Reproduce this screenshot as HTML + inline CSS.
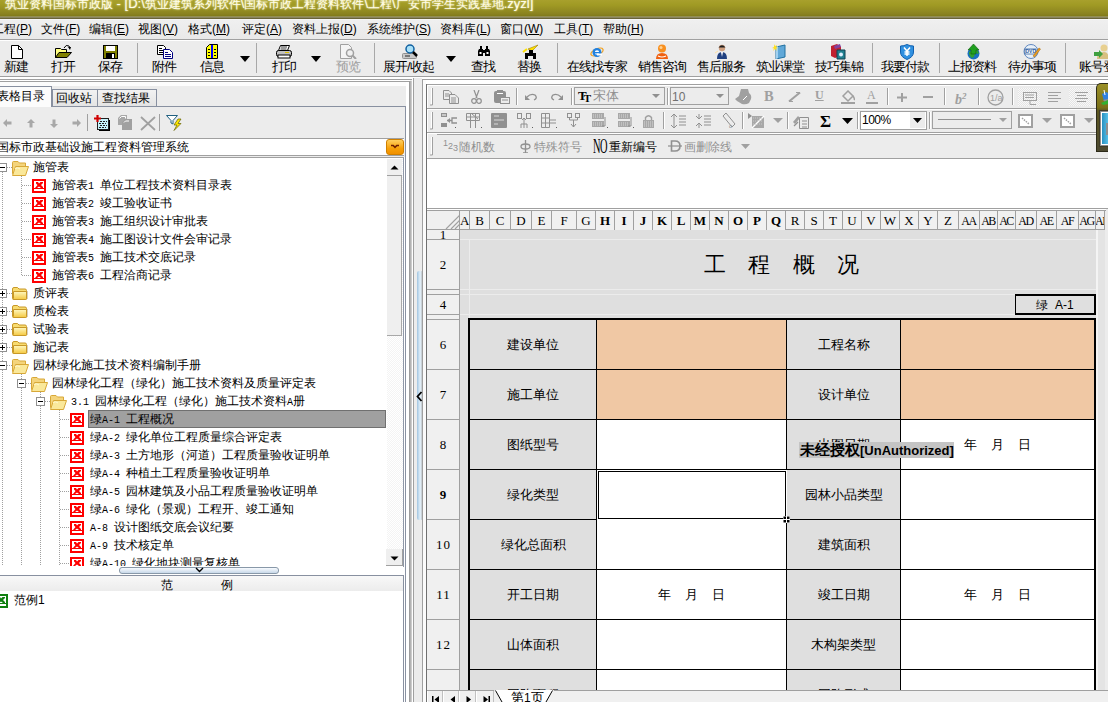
<!DOCTYPE html>
<html><head><meta charset="utf-8">
<style>
*{box-sizing:border-box;margin:0;padding:0}
html,body{width:1108px;height:702px;overflow:hidden;background:#f0f0f0;font-family:"Liberation Sans",sans-serif;font-size:12px;color:#000}
.a{position:absolute}
#title{left:0;top:0;width:1108px;height:19px;background:linear-gradient(#a8a02c 0px,#a09a24 5px,#8a8220 14px,#807a1a 16px,#a8a488 17px,#6a6438 18px,#6a6438 19px);}
#title .t{left:5px;top:-4px;font-size:12px;color:#fffde8;white-space:nowrap;text-shadow:0 0 2px #fff8c0}
#menu{left:0;top:19px;width:1108px;height:20px;background:linear-gradient(#efefef,#e9e9e9);border-top:1px solid #f6f6f6}
.mi{top:1px;white-space:nowrap;font-size:12px}
#tb{left:0;top:39px;width:1108px;height:38px;background:#ececec;border-top:1px solid #a0a0a0;border-bottom:1px solid #a0a0a0;box-shadow:inset 0 1px 0 #fff}
.tl{top:19px;white-space:nowrap;font-size:13px;line-height:15px;letter-spacing:-1px;font-weight:500}
.sep{width:1px;background:#a8a8a8}
.dd{width:0;height:0;border-left:5px solid transparent;border-right:5px solid transparent;border-top:6px solid #000}
.ch{text-align:center;font-family:"Liberation Serif",serif;font-size:13px;line-height:21px;background:#f0f0f0;border-right:1px solid #a0a0a0}
.rh{text-align:center;font-family:"Liberation Serif",serif;font-size:13px;letter-spacing:1px;text-indent:1px;background:#f0f0f0;border-right:1px solid #a0a0a0;border-bottom:1px solid #a0a0a0}
.lab{text-align:center;font-size:13px;line-height:16px;white-space:nowrap}
.tt{white-space:nowrap;font-size:12px;line-height:18px;height:18px}
.asc{font-family:"Liberation Mono",monospace;font-size:10px}
.dv{width:1px;background:repeating-linear-gradient(#a0a0a0 0 1px,transparent 1px 2px)}
.dh{height:1px;background:repeating-linear-gradient(90deg,#a0a0a0 0 1px,transparent 1px 2px)}
</style></head><body>

<!-- p_top.html -->

<div id="title" class="a"><div class="t a">筑业资料国标市政版<span style="font-size:13px"> - [D:\</span>筑业建筑系列软件<span style="font-size:13px">\</span>国标市政工程资料软件<span style="font-size:13px">\</span>工程<span style="font-size:13px">\</span>广安市学生实践基地<span style="font-size:13px">.zyzl]</span></div></div>
<div id="menu" class="a">
<div class="mi a" style="left:-8px">工程(<u>P</u>)</div>
<div class="mi a" style="left:41px">文件(<u>F</u>)</div>
<div class="mi a" style="left:89px">编辑(<u>E</u>)</div>
<div class="mi a" style="left:138px">视图(<u>V</u>)</div>
<div class="mi a" style="left:188px">格式(<u>M</u>)</div>
<div class="mi a" style="left:242px">评定(<u>A</u>)</div>
<div class="mi a" style="left:292px">资料上报(<u>D</u>)</div>
<div class="mi a" style="left:367px">系统维护(<u>S</u>)</div>
<div class="mi a" style="left:440px">资料库(<u>L</u>)</div>
<div class="mi a" style="left:500px">窗口(<u>W</u>)</div>
<div class="mi a" style="left:554px">工具(<u>T</u>)</div>
<div class="mi a" style="left:603px">帮助(<u>H</u>)</div>
</div>
<div id="tb" class="a">
<div class="tl a" style="left:4px">新建</div>
<div class="tl a" style="left:51px">打开</div>
<div class="tl a" style="left:98px">保存</div>
<div class="sep a" style="left:137px;top:3px;height:30px"></div>
<div class="tl a" style="left:152px">附件</div>
<div class="tl a" style="left:200px">信息</div>
<div class="dd a" style="left:240px;top:16px"></div>
<div class="sep a" style="left:256px;top:3px;height:30px"></div>
<div class="tl a" style="left:272px">打印</div>
<div class="dd a" style="left:311px;top:16px"></div>
<div class="tl a" style="left:336px;color:#a0a0a0">预览</div>
<div class="sep a" style="left:374px;top:3px;height:30px"></div>
<div class="tl a" style="left:383px">展开/收起</div>
<div class="dd a" style="left:446px;top:16px"></div>
<div class="tl a" style="left:471px">查找</div>
<div class="tl a" style="left:517px">替换</div>
<div class="sep a" style="left:557px;top:3px;height:30px"></div>
<div class="tl a" style="left:567px">在线找专家</div>
<div class="tl a" style="left:638px">销售咨询</div>
<div class="tl a" style="left:697px">售后服务</div>
<div class="tl a" style="left:756px">筑业课堂</div>
<div class="tl a" style="left:815px">技巧集锦</div>
<div class="sep a" style="left:872px;top:3px;height:30px"></div>
<div class="tl a" style="left:881px">我要付款</div>
<div class="sep a" style="left:939px;top:3px;height:30px"></div>
<div class="tl a" style="left:948px">上报资料</div>
<div class="tl a" style="left:1008px">待办事项</div>
<div class="sep a" style="left:1065px;top:3px;height:30px"></div>
<div class="tl a" style="left:1079px">账号登录</div>
</div>


<!-- p_icons.html -->
<!-- new -->
<svg class="a" style="left:11px;top:45px" width="12" height="14"><path d="M0.5 0.5H7.5L11.5 4.5V13.5H0.5Z" fill="#fff" stroke="#000"/><path d="M7.5 0.5V4.5H11.5" fill="none" stroke="#000"/></svg>
<!-- open -->
<svg class="a" style="left:55px;top:44px" width="17" height="15"><path d="M9 4 Q11 0 14 2 L15 4" fill="none" stroke="#000" stroke-width="1"/><path d="M13 3 L16 3 L15 6Z" fill="#000"/><path d="M0.5 4.5H5.5L6.5 5.5H11.5V13.5H0.5Z" fill="#ffff80" stroke="#000"/><path d="M0.5 13.5L4 8.5H16.5L12 13.5Z" fill="#808000" stroke="#000"/></svg>
<!-- save -->
<svg class="a" style="left:103px;top:45px" width="15" height="14"><rect x="0.5" y="0.5" width="14" height="13" fill="#808000" stroke="#000"/><rect x="3" y="1" width="9" height="5" fill="#fff"/><rect x="3" y="8" width="9" height="6" fill="#000"/><rect x="9" y="9" width="2" height="4" fill="#fff"/></svg>
<!-- attach -->
<svg class="a" style="left:157px;top:45px" width="17" height="14"><path d="M0.5 0.5H6.5L8.5 2.5V9.5H0.5Z" fill="#fff" stroke="#000"/><path d="M2 3.5H5M2 5.5H7M2 7.5H7" stroke="#000"/><path d="M6.5 4.5H12.5L15.5 7.5V13.5H6.5Z" fill="#fff" stroke="#000080"/><path d="M8 7.5H11M8 9.5H14M8 11.5H14" stroke="#000080"/></svg>
<!-- info -->
<svg class="a" style="left:206px;top:44px" width="12" height="15"><path d="M3.5 0.5H11.5V14.5H0.5V3.5Z" fill="#ffff00" stroke="#000"/><rect x="5" y="1" width="2" height="13" fill="#0000ff"/><path d="M2 5.5H4M8 5.5H10M2 8.5H4M8 8.5H10M2 11.5H4M8 11.5H10" stroke="#000"/></svg>
<!-- print -->
<svg class="a" style="left:276px;top:45px" width="16" height="14"><path d="M4.5 0.5H13.5L11.5 5.5H2.5Z" fill="#fff" stroke="#000"/><path d="M5 2H11M4.5 4H10.5" stroke="#000" stroke-width="0.8"/><rect x="0.5" y="5.5" width="15" height="6" rx="2" fill="#c0c0c0" stroke="#000"/><rect x="2" y="10" width="12" height="3" fill="#fff" stroke="#000"/><rect x="9" y="7" width="4" height="1" fill="#e0c000"/></svg>
<!-- preview gray -->
<svg class="a" style="left:340px;top:44px" width="17" height="15"><path d="M0.5 0.5H8.5L11.5 3.5V14.5H0.5Z" fill="#f4f4f4" stroke="#a0a0a0"/><circle cx="10" cy="9" r="3.5" fill="#f0f0f0" stroke="#a0a0a0" stroke-width="1.5"/><path d="M12.5 11.5L16 15" stroke="#a0a0a0" stroke-width="2"/></svg>
<!-- expand -->
<svg class="a" style="left:402px;top:44px" width="17" height="16"><rect x="0.5" y="9.5" width="14" height="5" rx="1" fill="#c8c8c8" stroke="#909090"/><path d="M3 12H8" stroke="#404040" stroke-width="1.2"/><circle cx="8" cy="5" r="4" fill="#a8e0f8" stroke="#1060a0" stroke-width="1.5"/><path d="M11 8L15 12" stroke="#000" stroke-width="2.5"/></svg>
<!-- binoculars -->
<svg class="a" style="left:478px;top:46px" width="12" height="11"><path d="M1 3H5V10H0V5Z M7 3H11L12 5V10H7Z" fill="#000"/><rect x="2" y="0" width="2" height="3" fill="#000"/><rect x="8" y="0" width="2" height="3" fill="#000"/><rect x="4" y="4" width="4" height="3" fill="#000"/><rect x="1.5" y="6" width="2" height="2" fill="#fff"/><rect x="8.5" y="6" width="2" height="2" fill="#fff"/></svg>
<!-- replace -->
<svg class="a" style="left:522px;top:44px" width="17" height="16"><path d="M6 5 L16 1 L10 7Z" fill="#ffe000" stroke="#a08000" stroke-width="0.6"/><path d="M3 15V9H7V6H11V9H14V15H11V12H6V15Z" fill="#000"/><path d="M1 8L5 5" stroke="#ffe000" stroke-width="2"/></svg>
<!-- IE -->
<svg class="a" style="left:590px;top:45px" width="14" height="13"><ellipse cx="7" cy="7" rx="6.5" ry="3" fill="none" stroke="#f0a020" stroke-width="1.3" transform="rotate(-25 7 7)"/><circle cx="7" cy="7.5" r="4.5" fill="#2080e0"/><circle cx="7" cy="7.5" r="2.2" fill="#fff"/><rect x="3" y="7" width="8" height="1.4" fill="#2080e0"/><rect x="7" y="8.5" width="5" height="2" fill="#fff"/></svg>
<!-- sales person -->
<svg class="a" style="left:655px;top:44px" width="14" height="15"><circle cx="7" cy="4.5" r="4" fill="#f89020"/><circle cx="6" cy="3.5" r="1.5" fill="#ffd090"/><path d="M1 15 Q1 9 7 9 Q13 9 13 15Z" fill="#f06010"/><path d="M3 12 Q7 14 11 12" stroke="#fff" stroke-width="1.2" fill="none"/></svg>
<!-- after sales -->
<svg class="a" style="left:715px;top:44px" width="13" height="15"><circle cx="7" cy="4" r="3.2" fill="#d0a080"/><path d="M3.5 3.5 Q7 -1 10.5 3.5" fill="#202020"/><path d="M2 15 Q2 8 7 8 Q12 8 12 15Z" fill="#204080"/><path d="M6 8L7 13L8 8Z" fill="#fff"/><path d="M0 9 L3 7" stroke="#ffe0a0" stroke-width="1"/></svg>
<!-- book -->
<svg class="a" style="left:772px;top:44px" width="15" height="15"><path d="M4 3L13 1V13L4 15Z" fill="#60a8d8" stroke="#2070a0"/><path d="M4 3L6 2V14L4 15Z" fill="#a0d0f0"/><path d="M2 0L3 2L5 1L4 3L6 4L4 4.5L5 7L3 5L1 7L2 4.5L0 4L2 3Z" fill="#ffe020"/></svg>
<!-- tips -->
<svg class="a" style="left:831px;top:44px" width="16" height="16"><path d="M0 2L6 0L10 3V12L4 14L0 12Z" fill="#c02030"/><path d="M3 2L9 0L10 3L4 5Z" fill="#8040a0"/><path d="M6 6H14V15H6Z" fill="#208090" stroke="#104050"/><circle cx="10" cy="10.5" r="2" fill="#e0f0ff"/></svg>
<!-- yen -->
<svg class="a" style="left:900px;top:44px" width="14" height="16"><path d="M7 0.5 Q10 2 13.5 2 V8 Q13.5 13 7 15.5 Q0.5 13 0.5 8 V2 Q4 2 7 0.5Z" fill="#3090e0" stroke="#1060b0"/><path d="M4 3.5L7 7L10 3.5M7 7V12M4.5 8H9.5M4.5 10H9.5" stroke="#fff" stroke-width="1.5" fill="none"/></svg>
<!-- globe -->
<svg class="a" style="left:966px;top:44px" width="15" height="16"><circle cx="7.5" cy="9.5" r="6" fill="#1870c0"/><path d="M3 8 Q6 6 8 9 Q10 12 6 14 Q3 12 3 8Z M9 5 Q12 6 13 9 L11 10Z" fill="#30a030"/><path d="M7.5 0L13 6H10V10H5V6H2Z" fill="#20a020" stroke="#106010" stroke-width="0.6"/></svg>
<!-- dvd -->
<svg class="a" style="left:1023px;top:44px" width="18" height="15"><circle cx="8" cy="7.5" r="7" fill="#e8f0f8" stroke="#6088c0"/><rect x="2" y="5" width="11" height="5" fill="#fff" stroke="#3060a0" stroke-width="0.8"/><text x="2.5" y="9.3" font-size="5" font-family="Liberation Sans" font-weight="bold" fill="#3060a0">DVD</text><path d="M10 12L16 4L17.5 5L11.5 13Z" fill="#f0a020" stroke="#a06000" stroke-width="0.5"/></svg>
<!-- account -->
<svg class="a" style="left:1094px;top:44px" width="14" height="16"><circle cx="10" cy="4" r="3.5" fill="#e8d090"/><path d="M3 15 Q3 8 10 8 Q15 8 15 15Z" fill="#d8c080"/><path d="M0 8H5V6L9 10L5 14V12H0Z" fill="#40a040"/></svg>

<!-- p_rightbg.html -->
<div class="a" style="left:422px;top:79px;width:686px;height:623px;background:#ececec;border-left:1px solid #a0a0a0;border-top:1px solid #a0a0a0"></div>
<div class="a" style="left:423px;top:80px;width:685px;height:622px;border-left:3px solid #fff;border-top:4px solid #fff"></div>
<div class="a" style="left:426px;top:84px;width:682px;height:618px;background:#ececec;border-left:1px solid #a0a0a0;border-top:1px solid #a0a0a0"></div>
<div class="a" style="left:427px;top:85px;width:681px;height:1px;background:#fff"></div>
<div class="a" style="left:427px;top:85px;width:1px;height:73px;background:#fff"></div>
<!-- toolbar separators lines -->
<div class="a" style="left:427px;top:108px;width:681px;height:1px;background:#a0a0a0"></div>
<div class="a" style="left:427px;top:109px;width:681px;height:1px;background:#fff"></div>
<div class="a" style="left:427px;top:132px;width:681px;height:1px;background:#a0a0a0"></div>
<div class="a" style="left:427px;top:133px;width:681px;height:1px;background:#fff"></div>
<div class="a" style="left:437px;top:134px;width:671px;height:1px;background:#a0a0a0"></div>
<div class="a" style="left:427px;top:158px;width:681px;height:1px;background:#a0a0a0"></div>
<div class="a" style="left:427px;top:159px;width:681px;height:49px;background:#fff"></div>
<div class="a" style="left:427px;top:208px;width:681px;height:1px;background:#a0a0a0"></div>

<!-- p_left.html -->
<div id="lp" class="a" style="left:0;top:77px;width:422px;height:625px;background:#ececec"></div>
<!-- two horizontal lines under toolbar -->
<div class="a" style="left:0;top:77px;width:1108px;height:2px;background:#fff"></div>
<div class="a" style="left:0;top:79px;width:412px;height:1px;background:#a0a0a0"></div>
<div class="a" style="left:0;top:80px;width:410px;height:1px;background:#fff"></div>
<div class="a" style="left:0;top:81px;width:410px;height:1px;background:#a0a0a0"></div>
<div class="a" style="left:0;top:82px;width:409px;height:4px;background:#fcfcfc"></div>
<!-- tabs -->
<div class="a" style="left:0;top:106px;width:406px;height:1px;background:#8890a0"></div>
<div class="a tab" style="left:52px;top:89px;width:46px;height:17px;background:linear-gradient(#f2f2f2,#e4e4e4);border:1px solid #8890a0;border-bottom:none;"></div>
<div class="a tab" style="left:97px;top:89px;width:60px;height:17px;background:linear-gradient(#f2f2f2,#e4e4e4);border:1px solid #8890a0;border-bottom:none;"></div>
<div class="a tab" style="left:-2px;top:86px;width:54px;height:21px;background:#fcfcfc;border:1px solid #8890a0;border-bottom:none;"></div>
<div class="a" style="left:-3px;top:88px;white-space:nowrap;font-size:12px;line-height:16px">表格目录</div>
<div class="a" style="left:56px;top:90px;white-space:nowrap;font-size:12px">回收站</div>
<div class="a" style="left:102px;top:90px;white-space:nowrap;font-size:12px">查找结果</div>
<!-- left toolbar -->
<div class="a" style="left:0;top:107px;width:404px;height:31px;background:#ececec"></div>
<!-- combo -->
<div class="a" style="left:0;top:138px;width:404px;height:18px;background:#fff;border-top:1px solid #a0a0a0;border-bottom:1px solid #a0a0a0"></div>
<div class="a" style="left:-3px;top:139px;white-space:nowrap;font-size:12px;line-height:16px">国标市政基础设施工程资料管理系统</div>
<div class="a" style="left:386px;top:139px;width:18px;height:16px;border-radius:3px;background:linear-gradient(#ffd060,#f7a008 60%,#f09000);border:1px solid #d08000"></div>
<!-- tree box -->
<div class="a" style="left:0;top:157px;width:405px;height:545px;background:#fff"></div>
<div class="a" style="left:0;top:157px;width:404px;height:410px;background:#fff;border-top:1px solid #a0a0a0;border-right:1px solid #9098a8"></div>
<!-- scrollbar -->
<div class="a" style="left:387px;top:159px;width:16px;height:407px;background:repeating-conic-gradient(#f4f4f4 0 25%,#ffffff 0 50%) 0 0/2px 2px"></div>
<div class="a" style="left:387px;top:159px;width:15px;height:17px;background:#efefef;border-bottom:1px solid #a0a0a0"></div>
<svg class="a" style="left:390px;top:165px" width="9" height="5"><path d="M0.5 4.5H8.5L4.5 0.5Z" fill="#000"/></svg>
<div class="a" style="left:387px;top:176px;width:15px;height:160px;background:#efefef;border-right:1px solid #a8a8a8;border-bottom:1px solid #a8a8a8"></div>
<div class="a" style="left:386px;top:549px;width:17px;height:17px;background:#efefef;border-right:1px solid #a0a0a0;border-bottom:1px solid #a0a0a0"></div>
<svg class="a" style="left:390px;top:556px" width="9" height="5"><path d="M0.5 0.5H8.5L4.5 4.5Z" fill="#000"/></svg>
<!-- bottom panel -->
<div class="a" style="left:0;top:575px;width:404px;height:127px;background:#fff;border-top:1px solid #8890a0;border-right:1px solid #8890a0"></div>
<div class="a" style="left:0;top:576px;width:403px;height:15px;background:linear-gradient(#f8f8f8,#ececec)"></div>
<div class="a" style="left:161px;top:578px;font-size:12px;line-height:15px">范</div>
<div class="a" style="left:221px;top:578px;font-size:12px;line-height:15px">例</div>
<div class="a" style="left:14px;top:593px;font-size:12px;line-height:15px">范例1</div>
<!-- splitter collapse -->
<div class="a" style="left:119px;top:567px;width:160px;height:7px;border-radius:3px;background:linear-gradient(#f8fbff,#c8d8e8);border:1px solid #8898a8"></div>
<!-- splitter vertical -->
<div class="a" style="left:405px;top:106px;width:1px;height:596px;background:#8a92a2"></div>
<div class="a" style="left:406px;top:82px;width:3px;height:620px;background:#fff"></div>
<div class="a" style="left:409px;top:81px;width:3px;height:621px;background:linear-gradient(90deg,#909090,#d8d8d8)"></div>
<div class="a" style="left:412px;top:78px;width:1px;height:624px;background:#fff"></div>
<div class="a" style="left:413px;top:78px;width:1px;height:624px;background:#a0a0a0"></div>
<div class="a" style="left:414px;top:78px;width:8px;height:624px;background:#ececec"></div>
<div class="a" style="left:417px;top:271px;width:6px;height:249px;background:linear-gradient(90deg,#a0c4e0,#e4f2fc 55%,#a8a8a8);border-radius:2px"></div>
<div class="a" style="left:422px;top:79px;width:1px;height:623px;background:#a0a0a0"></div>
<div class="a" style="left:423px;top:80px;width:3px;height:622px;background:#fbfbfb"></div>
<div class="a" style="left:426px;top:84px;width:1px;height:618px;background:#707070"></div>

<!-- p_ltb.html -->
<svg class="a" style="left:3px;top:119px" width="9" height="8"><path d="M0 4L4 0V2.5H8.5V5.5H4V8Z" fill="#a8a8a8"/></svg>
<svg class="a" style="left:27px;top:119px" width="8" height="9"><path d="M4 0L8 4H5.5V8.5H2.5V4H0Z" fill="#a8a8a8"/></svg>
<svg class="a" style="left:50px;top:119px" width="8" height="9"><path d="M4 9L8 5H5.5V0.5H2.5V5H0Z" fill="#a8a8a8"/></svg>
<svg class="a" style="left:72px;top:119px" width="9" height="8"><path d="M9 4L5 0V2.5H0.5V5.5H5V8Z" fill="#a8a8a8"/></svg>
<div class="a" style="left:87px;top:114px;width:1px;height:17px;background:#a0a0a0"></div>

<svg class="a" style="left:94px;top:115px" width="16" height="16"><rect x="5" y="5" width="11" height="11" fill="#000"/><rect x="3.5" y="3.5" width="11" height="11" fill="#c8f4fc" stroke="#202020"/><path d="M6 6.5H13M5 8.5H12M6 10.5H13M5 12.5H12" stroke="#202020" stroke-dasharray="2 1"/><path d="M0 3.5H7M3.5 0V7" stroke="#d00000" stroke-width="2.2"/></svg>
<svg class="a" style="left:118px;top:115px" width="15" height="16"><path d="M0 3L3 0H9V10H0Z" fill="#a8a8a8"/><path d="M1.5 3.5L3.5 1.5H7.5V3.5" fill="none" stroke="#fff"/><path d="M4 7L7 4H14V15H4Z" fill="#a0a0a0"/><path d="M6 7.5L7.5 6H11" fill="none" stroke="#fff"/></svg>
<svg class="a" style="left:140px;top:116px" width="16" height="15"><path d="M1 1L15 14M15 1L1 14" stroke="#a0a0a0" stroke-width="1.8"/></svg>
<div class="a" style="left:159px;top:114px;width:1px;height:17px;background:#a0a0a0"></div>

<svg class="a" style="left:166px;top:115px" width="17" height="16"><path d="M0.5 0.5H11.5L7 5.5V9L5 8V5.5Z" fill="#fff" stroke="#206080"/><path d="M12 4L8 10H11L8 15.5L15 8.5H12L15 4Z" fill="#ffe800" stroke="#606000" stroke-width="0.7"/></svg>
<!-- combo arrow -->
<svg class="a" style="left:390px;top:143px" width="10" height="8"><path d="M1 2.5H3.2L5 4.3L6.8 2.5H9" stroke="#702000" stroke-width="1.6" fill="none"/></svg>
<!-- collapse arrow on splitter -->
<svg class="a" style="left:195px;top:567px" width="9" height="6"><path d="M1 1L4.5 4.5L8 1" stroke="#000" stroke-width="1.4" fill="none"/></svg>
<!-- small green icon in bottom panel -->
<svg class="a" style="left:0px;top:594px" width="8" height="14"><g transform="translate(-6 0)"><rect x="0" y="0" width="14" height="14" fill="#108010"/><rect x="2" y="2" width="10" height="7" fill="#fff"/><path d="M4 3H6L7 4.5L8.5 3H11V4L9 6L11 8V9H9L7 7.5L5 9H3L5.5 6L4 4.5Z" fill="#108010"/><rect x="2" y="10" width="10" height="2" fill="#fff"/></g></svg>
<!-- splitter arrow -->
<svg class="a" style="left:416px;top:391px" width="7" height="11"><path d="M5.5 1L1.5 5.5L5.5 10" stroke="#000" stroke-width="1.8" fill="none"/></svg>

<!-- p_tree.html -->
<div class="a" style="left:0;top:158px;width:386px;height:408px;overflow:hidden">
<div class="a dv" style="left:2px;top:14px;height:394px"></div>
<div class="a dv" style="left:21px;top:18px;height:100px"></div>
<div class="a dv" style="left:21px;top:216px;height:192px"></div>
<div class="a dv" style="left:40px;top:234px;height:174px"></div>
<div class="a dv" style="left:59px;top:252px;height:156px"></div>
<div class="a dh" style="left:7px;top:9px;width:5px"></div>
<svg class="a" style="left:-2px;top:5px" width="9" height="9"><rect x="0.5" y="0.5" width="8" height="8" fill="#fff" stroke="#909090"/><path d="M2 4.5H7" stroke="#000"/></svg>
<svg class="a" style="left:12px;top:3px" width="17" height="15"><path d="M0.5 1.5Q0.5 0.5 1.5 0.5H6L7.5 2H13.5V12.5H0.5Z" fill="#f4d47c" stroke="#d8a838"/><path d="M0.5 14.5L3.5 5.5H16.5L13.5 14.5Z" fill="#fae89a" stroke="#d8a838"/><path d="M3 7.5 Q6 6 8 8" stroke="#fff8d0" fill="none"/></svg>
<div class="a tt" style="left:33px;top:0px">施管表</div>
<div class="a dh" style="left:22px;top:27px;width:9px"></div>
<svg class="a" style="left:32px;top:21px" width="14" height="14"><rect x="0" y="0" width="14" height="14" fill="#f00"/><rect x="2" y="2" width="10" height="7" fill="#fff"/><path d="M4 3H6L7 4.5L8.5 3H11V4L9 6L11 8V9H9L7 7.5L5 9H3L5.5 6L4 4.5Z" fill="#f00"/><path d="M10 9.5H12" stroke="#f00"/><rect x="2" y="10" width="10" height="2" fill="#fff"/></svg>
<div class="a tt" style="left:52px;top:18px">施管表<span class="asc">1&nbsp;</span>单位工程技术资料目录表</div>
<div class="a dh" style="left:22px;top:45px;width:9px"></div>
<svg class="a" style="left:32px;top:39px" width="14" height="14"><rect x="0" y="0" width="14" height="14" fill="#f00"/><rect x="2" y="2" width="10" height="7" fill="#fff"/><path d="M4 3H6L7 4.5L8.5 3H11V4L9 6L11 8V9H9L7 7.5L5 9H3L5.5 6L4 4.5Z" fill="#f00"/><path d="M10 9.5H12" stroke="#f00"/><rect x="2" y="10" width="10" height="2" fill="#fff"/></svg>
<div class="a tt" style="left:52px;top:36px">施管表<span class="asc">2&nbsp;</span>竣工验收证书</div>
<div class="a dh" style="left:22px;top:63px;width:9px"></div>
<svg class="a" style="left:32px;top:57px" width="14" height="14"><rect x="0" y="0" width="14" height="14" fill="#f00"/><rect x="2" y="2" width="10" height="7" fill="#fff"/><path d="M4 3H6L7 4.5L8.5 3H11V4L9 6L11 8V9H9L7 7.5L5 9H3L5.5 6L4 4.5Z" fill="#f00"/><path d="M10 9.5H12" stroke="#f00"/><rect x="2" y="10" width="10" height="2" fill="#fff"/></svg>
<div class="a tt" style="left:52px;top:54px">施管表<span class="asc">3&nbsp;</span>施工组织设计审批表</div>
<div class="a dh" style="left:22px;top:81px;width:9px"></div>
<svg class="a" style="left:32px;top:75px" width="14" height="14"><rect x="0" y="0" width="14" height="14" fill="#f00"/><rect x="2" y="2" width="10" height="7" fill="#fff"/><path d="M4 3H6L7 4.5L8.5 3H11V4L9 6L11 8V9H9L7 7.5L5 9H3L5.5 6L4 4.5Z" fill="#f00"/><path d="M10 9.5H12" stroke="#f00"/><rect x="2" y="10" width="10" height="2" fill="#fff"/></svg>
<div class="a tt" style="left:52px;top:72px">施管表<span class="asc">4&nbsp;</span>施工图设计文件会审记录</div>
<div class="a dh" style="left:22px;top:99px;width:9px"></div>
<svg class="a" style="left:32px;top:93px" width="14" height="14"><rect x="0" y="0" width="14" height="14" fill="#f00"/><rect x="2" y="2" width="10" height="7" fill="#fff"/><path d="M4 3H6L7 4.5L8.5 3H11V4L9 6L11 8V9H9L7 7.5L5 9H3L5.5 6L4 4.5Z" fill="#f00"/><path d="M10 9.5H12" stroke="#f00"/><rect x="2" y="10" width="10" height="2" fill="#fff"/></svg>
<div class="a tt" style="left:52px;top:90px">施管表<span class="asc">5&nbsp;</span>施工技术交底记录</div>
<div class="a dh" style="left:22px;top:117px;width:9px"></div>
<svg class="a" style="left:32px;top:111px" width="14" height="14"><rect x="0" y="0" width="14" height="14" fill="#f00"/><rect x="2" y="2" width="10" height="7" fill="#fff"/><path d="M4 3H6L7 4.5L8.5 3H11V4L9 6L11 8V9H9L7 7.5L5 9H3L5.5 6L4 4.5Z" fill="#f00"/><path d="M10 9.5H12" stroke="#f00"/><rect x="2" y="10" width="10" height="2" fill="#fff"/></svg>
<div class="a tt" style="left:52px;top:108px">施管表<span class="asc">6&nbsp;</span>工程洽商记录</div>
<div class="a dh" style="left:7px;top:135px;width:5px"></div>
<svg class="a" style="left:-2px;top:131px" width="9" height="9"><rect x="0.5" y="0.5" width="8" height="8" fill="#fff" stroke="#909090"/><path d="M2 4.5H7M4.5 2V7" stroke="#000"/></svg>
<svg class="a" style="left:12px;top:129px" width="16" height="13"><defs><linearGradient id="fg" x1="0" y1="0" x2="0" y2="1"><stop offset="0" stop-color="#fff8c0"/><stop offset="1" stop-color="#f4c840"/></linearGradient></defs><path d="M0.5 2Q0.5 0.5 2 0.5H5.5L7 2H13Q14.5 2 14.5 3.5V11.5Q14.5 12.5 13.5 12.5H1.5Q0.5 12.5 0.5 11.5Z" fill="#f8dc70" stroke="#c89828"/><path d="M1.5 4.5H14.5V11.5Q14.5 12.5 13.5 12.5H1.5Q1.5 12.5 1.5 11.5Z" fill="url(#fg)" stroke="#c89828"/><path d="M15.5 4V12" stroke="#b0a080" stroke-opacity="0.5"/></svg>
<div class="a tt" style="left:33px;top:126px">质评表</div>
<div class="a dh" style="left:7px;top:153px;width:5px"></div>
<svg class="a" style="left:-2px;top:149px" width="9" height="9"><rect x="0.5" y="0.5" width="8" height="8" fill="#fff" stroke="#909090"/><path d="M2 4.5H7M4.5 2V7" stroke="#000"/></svg>
<svg class="a" style="left:12px;top:147px" width="16" height="13"><defs><linearGradient id="fg" x1="0" y1="0" x2="0" y2="1"><stop offset="0" stop-color="#fff8c0"/><stop offset="1" stop-color="#f4c840"/></linearGradient></defs><path d="M0.5 2Q0.5 0.5 2 0.5H5.5L7 2H13Q14.5 2 14.5 3.5V11.5Q14.5 12.5 13.5 12.5H1.5Q0.5 12.5 0.5 11.5Z" fill="#f8dc70" stroke="#c89828"/><path d="M1.5 4.5H14.5V11.5Q14.5 12.5 13.5 12.5H1.5Q1.5 12.5 1.5 11.5Z" fill="url(#fg)" stroke="#c89828"/><path d="M15.5 4V12" stroke="#b0a080" stroke-opacity="0.5"/></svg>
<div class="a tt" style="left:33px;top:144px">质检表</div>
<div class="a dh" style="left:7px;top:171px;width:5px"></div>
<svg class="a" style="left:-2px;top:167px" width="9" height="9"><rect x="0.5" y="0.5" width="8" height="8" fill="#fff" stroke="#909090"/><path d="M2 4.5H7M4.5 2V7" stroke="#000"/></svg>
<svg class="a" style="left:12px;top:165px" width="16" height="13"><defs><linearGradient id="fg" x1="0" y1="0" x2="0" y2="1"><stop offset="0" stop-color="#fff8c0"/><stop offset="1" stop-color="#f4c840"/></linearGradient></defs><path d="M0.5 2Q0.5 0.5 2 0.5H5.5L7 2H13Q14.5 2 14.5 3.5V11.5Q14.5 12.5 13.5 12.5H1.5Q0.5 12.5 0.5 11.5Z" fill="#f8dc70" stroke="#c89828"/><path d="M1.5 4.5H14.5V11.5Q14.5 12.5 13.5 12.5H1.5Q1.5 12.5 1.5 11.5Z" fill="url(#fg)" stroke="#c89828"/><path d="M15.5 4V12" stroke="#b0a080" stroke-opacity="0.5"/></svg>
<div class="a tt" style="left:33px;top:162px">试验表</div>
<div class="a dh" style="left:7px;top:189px;width:5px"></div>
<svg class="a" style="left:-2px;top:185px" width="9" height="9"><rect x="0.5" y="0.5" width="8" height="8" fill="#fff" stroke="#909090"/><path d="M2 4.5H7M4.5 2V7" stroke="#000"/></svg>
<svg class="a" style="left:12px;top:183px" width="16" height="13"><defs><linearGradient id="fg" x1="0" y1="0" x2="0" y2="1"><stop offset="0" stop-color="#fff8c0"/><stop offset="1" stop-color="#f4c840"/></linearGradient></defs><path d="M0.5 2Q0.5 0.5 2 0.5H5.5L7 2H13Q14.5 2 14.5 3.5V11.5Q14.5 12.5 13.5 12.5H1.5Q0.5 12.5 0.5 11.5Z" fill="#f8dc70" stroke="#c89828"/><path d="M1.5 4.5H14.5V11.5Q14.5 12.5 13.5 12.5H1.5Q1.5 12.5 1.5 11.5Z" fill="url(#fg)" stroke="#c89828"/><path d="M15.5 4V12" stroke="#b0a080" stroke-opacity="0.5"/></svg>
<div class="a tt" style="left:33px;top:180px">施记表</div>
<div class="a dh" style="left:7px;top:207px;width:5px"></div>
<svg class="a" style="left:-2px;top:203px" width="9" height="9"><rect x="0.5" y="0.5" width="8" height="8" fill="#fff" stroke="#909090"/><path d="M2 4.5H7" stroke="#000"/></svg>
<svg class="a" style="left:12px;top:201px" width="17" height="15"><path d="M0.5 1.5Q0.5 0.5 1.5 0.5H6L7.5 2H13.5V12.5H0.5Z" fill="#f4d47c" stroke="#d8a838"/><path d="M0.5 14.5L3.5 5.5H16.5L13.5 14.5Z" fill="#fae89a" stroke="#d8a838"/><path d="M3 7.5 Q6 6 8 8" stroke="#fff8d0" fill="none"/></svg>
<div class="a tt" style="left:33px;top:198px">园林绿化施工技术资料编制手册</div>
<div class="a dh" style="left:26px;top:225px;width:5px"></div>
<svg class="a" style="left:17px;top:221px" width="9" height="9"><rect x="0.5" y="0.5" width="8" height="8" fill="#fff" stroke="#909090"/><path d="M2 4.5H7" stroke="#000"/></svg>
<svg class="a" style="left:31px;top:219px" width="17" height="15"><path d="M0.5 1.5Q0.5 0.5 1.5 0.5H6L7.5 2H13.5V12.5H0.5Z" fill="#f4d47c" stroke="#d8a838"/><path d="M0.5 14.5L3.5 5.5H16.5L13.5 14.5Z" fill="#fae89a" stroke="#d8a838"/><path d="M3 7.5 Q6 6 8 8" stroke="#fff8d0" fill="none"/></svg>
<div class="a tt" style="left:52px;top:216px">园林绿化工程（绿化）施工技术资料及质量评定表</div>
<div class="a dh" style="left:45px;top:243px;width:5px"></div>
<svg class="a" style="left:36px;top:239px" width="9" height="9"><rect x="0.5" y="0.5" width="8" height="8" fill="#fff" stroke="#909090"/><path d="M2 4.5H7" stroke="#000"/></svg>
<svg class="a" style="left:50px;top:237px" width="17" height="15"><path d="M0.5 1.5Q0.5 0.5 1.5 0.5H6L7.5 2H13.5V12.5H0.5Z" fill="#f4d47c" stroke="#d8a838"/><path d="M0.5 14.5L3.5 5.5H16.5L13.5 14.5Z" fill="#fae89a" stroke="#d8a838"/><path d="M3 7.5 Q6 6 8 8" stroke="#fff8d0" fill="none"/></svg>
<div class="a tt" style="left:71px;top:234px"><span class="asc">3.1&nbsp;</span>园林绿化工程（绿化）施工技术资料<span class="asc">A</span>册</div>
<div class="a dh" style="left:60px;top:261px;width:9px"></div>
<svg class="a" style="left:70px;top:255px" width="14" height="14"><rect x="0" y="0" width="14" height="14" fill="#f00"/><rect x="2" y="2" width="10" height="7" fill="#fff"/><path d="M4 3H6L7 4.5L8.5 3H11V4L9 6L11 8V9H9L7 7.5L5 9H3L5.5 6L4 4.5Z" fill="#f00"/><path d="M10 9.5H12" stroke="#f00"/><rect x="2" y="10" width="10" height="2" fill="#fff"/></svg>
<div class="a" style="left:88px;top:252px;width:298px;height:18px;background:#a0a0a0;border:1px solid #707070"></div>
<div class="a tt" style="left:90px;top:252px">绿<span class="asc">A-1&nbsp;</span>工程概况</div>
<div class="a dh" style="left:60px;top:279px;width:9px"></div>
<svg class="a" style="left:70px;top:273px" width="14" height="14"><rect x="0" y="0" width="14" height="14" fill="#f00"/><rect x="2" y="2" width="10" height="7" fill="#fff"/><path d="M4 3H6L7 4.5L8.5 3H11V4L9 6L11 8V9H9L7 7.5L5 9H3L5.5 6L4 4.5Z" fill="#f00"/><path d="M10 9.5H12" stroke="#f00"/><rect x="2" y="10" width="10" height="2" fill="#fff"/></svg>
<div class="a tt" style="left:90px;top:270px">绿<span class="asc">A-2&nbsp;</span>绿化单位工程质量综合评定表</div>
<div class="a dh" style="left:60px;top:297px;width:9px"></div>
<svg class="a" style="left:70px;top:291px" width="14" height="14"><rect x="0" y="0" width="14" height="14" fill="#f00"/><rect x="2" y="2" width="10" height="7" fill="#fff"/><path d="M4 3H6L7 4.5L8.5 3H11V4L9 6L11 8V9H9L7 7.5L5 9H3L5.5 6L4 4.5Z" fill="#f00"/><path d="M10 9.5H12" stroke="#f00"/><rect x="2" y="10" width="10" height="2" fill="#fff"/></svg>
<div class="a tt" style="left:90px;top:288px">绿<span class="asc">A-3&nbsp;</span>土方地形（河道）工程质量验收证明单</div>
<div class="a dh" style="left:60px;top:315px;width:9px"></div>
<svg class="a" style="left:70px;top:309px" width="14" height="14"><rect x="0" y="0" width="14" height="14" fill="#f00"/><rect x="2" y="2" width="10" height="7" fill="#fff"/><path d="M4 3H6L7 4.5L8.5 3H11V4L9 6L11 8V9H9L7 7.5L5 9H3L5.5 6L4 4.5Z" fill="#f00"/><path d="M10 9.5H12" stroke="#f00"/><rect x="2" y="10" width="10" height="2" fill="#fff"/></svg>
<div class="a tt" style="left:90px;top:306px">绿<span class="asc">A-4&nbsp;</span>种植土工程质量验收证明单</div>
<div class="a dh" style="left:60px;top:333px;width:9px"></div>
<svg class="a" style="left:70px;top:327px" width="14" height="14"><rect x="0" y="0" width="14" height="14" fill="#f00"/><rect x="2" y="2" width="10" height="7" fill="#fff"/><path d="M4 3H6L7 4.5L8.5 3H11V4L9 6L11 8V9H9L7 7.5L5 9H3L5.5 6L4 4.5Z" fill="#f00"/><path d="M10 9.5H12" stroke="#f00"/><rect x="2" y="10" width="10" height="2" fill="#fff"/></svg>
<div class="a tt" style="left:90px;top:324px">绿<span class="asc">A-5&nbsp;</span>园林建筑及小品工程质量验收证明单</div>
<div class="a dh" style="left:60px;top:351px;width:9px"></div>
<svg class="a" style="left:70px;top:345px" width="14" height="14"><rect x="0" y="0" width="14" height="14" fill="#f00"/><rect x="2" y="2" width="10" height="7" fill="#fff"/><path d="M4 3H6L7 4.5L8.5 3H11V4L9 6L11 8V9H9L7 7.5L5 9H3L5.5 6L4 4.5Z" fill="#f00"/><path d="M10 9.5H12" stroke="#f00"/><rect x="2" y="10" width="10" height="2" fill="#fff"/></svg>
<div class="a tt" style="left:90px;top:342px">绿<span class="asc">A-6&nbsp;</span>绿化（景观）工程开、竣工通知</div>
<div class="a dh" style="left:60px;top:369px;width:9px"></div>
<svg class="a" style="left:70px;top:363px" width="14" height="14"><rect x="0" y="0" width="14" height="14" fill="#f00"/><rect x="2" y="2" width="10" height="7" fill="#fff"/><path d="M4 3H6L7 4.5L8.5 3H11V4L9 6L11 8V9H9L7 7.5L5 9H3L5.5 6L4 4.5Z" fill="#f00"/><path d="M10 9.5H12" stroke="#f00"/><rect x="2" y="10" width="10" height="2" fill="#fff"/></svg>
<div class="a tt" style="left:90px;top:360px"><span class="asc">A-8&nbsp;</span>设计图纸交底会议纪要</div>
<div class="a dh" style="left:60px;top:387px;width:9px"></div>
<svg class="a" style="left:70px;top:381px" width="14" height="14"><rect x="0" y="0" width="14" height="14" fill="#f00"/><rect x="2" y="2" width="10" height="7" fill="#fff"/><path d="M4 3H6L7 4.5L8.5 3H11V4L9 6L11 8V9H9L7 7.5L5 9H3L5.5 6L4 4.5Z" fill="#f00"/><path d="M10 9.5H12" stroke="#f00"/><rect x="2" y="10" width="10" height="2" fill="#fff"/></svg>
<div class="a tt" style="left:90px;top:378px"><span class="asc">A-9&nbsp;</span>技术核定单</div>
<div class="a dh" style="left:60px;top:405px;width:9px"></div>
<svg class="a" style="left:70px;top:399px" width="14" height="14"><rect x="0" y="0" width="14" height="14" fill="#f00"/><rect x="2" y="2" width="10" height="7" fill="#fff"/><path d="M4 3H6L7 4.5L8.5 3H11V4L9 6L11 8V9H9L7 7.5L5 9H3L5.5 6L4 4.5Z" fill="#f00"/><path d="M10 9.5H12" stroke="#f00"/><rect x="2" y="10" width="10" height="2" fill="#fff"/></svg>
<div class="a tt" style="left:90px;top:396px">绿<span class="asc">A-10&nbsp;</span>绿化地块测量复核单</div>
</div>
<!-- sheet.html -->
<div class="a" style="left:427px;top:209px;width:679px;height:1px;background:#fff"></div>
<div class="a" style="left:427px;top:210px;width:679px;height:1px;background:#a0a0a0"></div>
<div class="a" style="left:427px;top:211px;width:33px;height:19px;background:#f0f0f0;border-right:1px solid #a0a0a0;border-bottom:1px solid #a0a0a0"></div>
<svg class="a" style="left:445px;top:214px" width="15" height="15"><path d="M1 15L15 1M6 15L15 6M10 15L15 10" stroke="#a0a0a0" stroke-width="1.2" fill="none"/></svg>
<div class="a ch" style="left:460px;top:211px;width:10px;height:19px;line-height:20px;border-bottom:1px solid #a0a0a0;font-weight:normal">A</div>
<div class="a ch" style="left:470px;top:211px;width:20px;height:19px;line-height:20px;border-bottom:1px solid #a0a0a0;font-weight:normal">B</div>
<div class="a ch" style="left:490px;top:211px;width:21px;height:19px;line-height:20px;border-bottom:1px solid #a0a0a0;font-weight:normal">C</div>
<div class="a ch" style="left:511px;top:211px;width:21px;height:19px;line-height:20px;border-bottom:1px solid #a0a0a0;font-weight:normal">D</div>
<div class="a ch" style="left:532px;top:211px;width:20px;height:19px;line-height:20px;border-bottom:1px solid #a0a0a0;font-weight:normal">E</div>
<div class="a ch" style="left:552px;top:211px;width:25px;height:19px;line-height:20px;border-bottom:1px solid #a0a0a0;font-weight:normal">F</div>
<div class="a ch" style="left:577px;top:211px;width:19px;height:19px;line-height:20px;border-bottom:1px solid #a0a0a0;font-weight:normal">G</div>
<div class="a ch" style="left:596px;top:211px;width:19px;height:19px;line-height:20px;border-bottom:none;font-weight:bold">H</div>
<div class="a ch" style="left:615px;top:211px;width:19px;height:19px;line-height:20px;border-bottom:none;font-weight:bold">I</div>
<div class="a ch" style="left:634px;top:211px;width:19px;height:19px;line-height:20px;border-bottom:none;font-weight:bold">J</div>
<div class="a ch" style="left:653px;top:211px;width:19px;height:19px;line-height:20px;border-bottom:none;font-weight:bold">K</div>
<div class="a ch" style="left:672px;top:211px;width:19px;height:19px;line-height:20px;border-bottom:none;font-weight:bold">L</div>
<div class="a ch" style="left:691px;top:211px;width:19px;height:19px;line-height:20px;border-bottom:none;font-weight:bold">M</div>
<div class="a ch" style="left:710px;top:211px;width:19px;height:19px;line-height:20px;border-bottom:none;font-weight:bold">N</div>
<div class="a ch" style="left:729px;top:211px;width:19px;height:19px;line-height:20px;border-bottom:none;font-weight:bold">O</div>
<div class="a ch" style="left:748px;top:211px;width:19px;height:19px;line-height:20px;border-bottom:none;font-weight:bold">P</div>
<div class="a ch" style="left:767px;top:211px;width:19px;height:19px;line-height:20px;border-bottom:none;font-weight:bold">Q</div>
<div class="a ch" style="left:786px;top:211px;width:19px;height:19px;line-height:20px;border-bottom:1px solid #a0a0a0;font-weight:normal">R</div>
<div class="a ch" style="left:805px;top:211px;width:19px;height:19px;line-height:20px;border-bottom:1px solid #a0a0a0;font-weight:normal">S</div>
<div class="a ch" style="left:824px;top:211px;width:19px;height:19px;line-height:20px;border-bottom:1px solid #a0a0a0;font-weight:normal">T</div>
<div class="a ch" style="left:843px;top:211px;width:19px;height:19px;line-height:20px;border-bottom:1px solid #a0a0a0;font-weight:normal">U</div>
<div class="a ch" style="left:862px;top:211px;width:19px;height:19px;line-height:20px;border-bottom:1px solid #a0a0a0;font-weight:normal">V</div>
<div class="a ch" style="left:881px;top:211px;width:19px;height:19px;line-height:20px;border-bottom:1px solid #a0a0a0;font-weight:normal">W</div>
<div class="a ch" style="left:900px;top:211px;width:19px;height:19px;line-height:20px;border-bottom:1px solid #a0a0a0;font-weight:normal">X</div>
<div class="a ch" style="left:919px;top:211px;width:19px;height:19px;line-height:20px;border-bottom:1px solid #a0a0a0;font-weight:normal">Y</div>
<div class="a ch" style="left:938px;top:211px;width:21px;height:19px;line-height:20px;border-bottom:1px solid #a0a0a0;font-weight:normal">Z</div>
<div class="a ch" style="left:959px;top:211px;width:21px;height:19px;line-height:20px;border-bottom:1px solid #a0a0a0;font-weight:normal;font-size:12px;letter-spacing:-1.5px;text-indent:-1px;overflow:hidden">AA</div>
<div class="a ch" style="left:980px;top:211px;width:18px;height:19px;line-height:20px;border-bottom:1px solid #a0a0a0;font-weight:normal;font-size:12px;letter-spacing:-1.5px;text-indent:-1px;overflow:hidden">AB</div>
<div class="a ch" style="left:998px;top:211px;width:18px;height:19px;line-height:20px;border-bottom:1px solid #a0a0a0;font-weight:normal;font-size:12px;letter-spacing:-1.5px;text-indent:-1px;overflow:hidden">AC</div>
<div class="a ch" style="left:1016px;top:211px;width:21px;height:19px;line-height:20px;border-bottom:1px solid #a0a0a0;font-weight:normal;font-size:12px;letter-spacing:-1.5px;text-indent:-1px;overflow:hidden">AD</div>
<div class="a ch" style="left:1037px;top:211px;width:20px;height:19px;line-height:20px;border-bottom:1px solid #a0a0a0;font-weight:normal;font-size:12px;letter-spacing:-1.5px;text-indent:-1px;overflow:hidden">AE</div>
<div class="a ch" style="left:1057px;top:211px;width:22px;height:19px;line-height:20px;border-bottom:1px solid #a0a0a0;font-weight:normal;font-size:12px;letter-spacing:-1.5px;text-indent:-1px;overflow:hidden">AF</div>
<div class="a ch" style="left:1079px;top:211px;width:17px;height:19px;line-height:20px;border-bottom:1px solid #a0a0a0;font-weight:normal;font-size:12px;letter-spacing:-1.5px;text-indent:-1px;overflow:hidden">AG</div>
<div class="a ch" style="left:1096px;top:211px;width:9px;height:19px;line-height:20px;border-bottom:1px solid #a0a0a0;font-weight:normal;font-size:12px;letter-spacing:-1.5px;text-indent:-1px;overflow:hidden">AH</div>
<div class="a" style="left:460px;top:230px;width:636px;height:460px;background:#dfdfdf"></div>
<div class="a rh" style="left:427px;top:230px;width:33px;height:10px;line-height:9px;font-weight:normal">1</div>
<div class="a rh" style="left:427px;top:240px;width:33px;height:50px;line-height:49px;font-weight:normal">2</div>
<div class="a rh" style="left:427px;top:290px;width:33px;height:5px;line-height:4px;font-weight:normal"></div>
<div class="a rh" style="left:427px;top:295px;width:33px;height:20px;line-height:19px;font-weight:normal">4</div>
<div class="a rh" style="left:427px;top:315px;width:33px;height:5px;line-height:4px;font-weight:normal"></div>
<div class="a rh" style="left:427px;top:320px;width:33px;height:50px;line-height:49px;font-weight:normal">6</div>
<div class="a rh" style="left:427px;top:370px;width:33px;height:50px;line-height:49px;font-weight:normal">7</div>
<div class="a rh" style="left:427px;top:420px;width:33px;height:50px;line-height:49px;font-weight:normal">8</div>
<div class="a rh" style="left:427px;top:470px;width:33px;height:50px;line-height:49px;font-weight:bold">9</div>
<div class="a rh" style="left:427px;top:520px;width:33px;height:50px;line-height:49px;font-weight:normal">10</div>
<div class="a rh" style="left:427px;top:570px;width:33px;height:50px;line-height:49px;font-weight:normal">11</div>
<div class="a rh" style="left:427px;top:620px;width:33px;height:50px;line-height:49px;font-weight:normal">12</div>
<div class="a rh" style="left:427px;top:670px;width:33px;height:21px;line-height:20px;font-weight:normal"></div>
<div class="a" style="left:460px;top:239px;width:636px;height:1px;background:#ececec"></div>
<div class="a" style="left:460px;top:289px;width:636px;height:1px;background:#ececec"></div>
<div class="a" style="left:460px;top:294px;width:636px;height:1px;background:#ececec"></div>
<div class="a" style="left:460px;top:314px;width:636px;height:1px;background:#ececec"></div>
<div class="a" style="left:469px;top:239px;width:1px;height:80px;background:#ececec"></div>
<div class="a" style="left:704px;top:251px;font-size:22px;line-height:28px">工</div>
<div class="a" style="left:748px;top:251px;font-size:22px;line-height:28px">程</div>
<div class="a" style="left:793px;top:251px;font-size:22px;line-height:28px">概</div>
<div class="a" style="left:837px;top:251px;font-size:22px;line-height:28px">况</div>
<div class="a" style="left:1015px;top:294px;width:81px;height:21px;border:1px solid #000;border-width:2px 2px 2px 1px;text-align:center;line-height:18px;font-size:12px">绿&nbsp;&nbsp;A-1</div>
<div class="a" style="left:468px;top:318px;width:628px;height:400px;border:2px solid #000;background:#dfdfdf"></div>
<div class="a" style="left:597px;top:320px;width:189px;height:49px;background:#f0c8a4"></div>
<div class="a" style="left:901px;top:320px;width:193px;height:49px;background:#f0c8a4"></div>
<div class="a" style="left:597px;top:370px;width:189px;height:49px;background:#f0c8a4"></div>
<div class="a" style="left:901px;top:370px;width:193px;height:49px;background:#f0c8a4"></div>
<div class="a" style="left:597px;top:420px;width:189px;height:49px;background:#fff"></div>
<div class="a" style="left:901px;top:420px;width:193px;height:49px;background:#fff"></div>
<div class="a" style="left:597px;top:470px;width:189px;height:49px;background:#fff"></div>
<div class="a" style="left:901px;top:470px;width:193px;height:49px;background:#fff"></div>
<div class="a" style="left:597px;top:520px;width:189px;height:49px;background:#fff"></div>
<div class="a" style="left:901px;top:520px;width:193px;height:49px;background:#fff"></div>
<div class="a" style="left:597px;top:570px;width:189px;height:49px;background:#fff"></div>
<div class="a" style="left:901px;top:570px;width:193px;height:49px;background:#fff"></div>
<div class="a" style="left:597px;top:620px;width:189px;height:49px;background:#fff"></div>
<div class="a" style="left:901px;top:620px;width:193px;height:49px;background:#fff"></div>
<div class="a" style="left:597px;top:670px;width:189px;height:20px;background:#fff"></div>
<div class="a" style="left:901px;top:670px;width:193px;height:20px;background:#fff"></div>
<div class="a" style="left:470px;top:369px;width:624px;height:1px;background:#000"></div>
<div class="a" style="left:470px;top:419px;width:624px;height:1px;background:#000"></div>
<div class="a" style="left:470px;top:469px;width:624px;height:1px;background:#000"></div>
<div class="a" style="left:470px;top:519px;width:624px;height:1px;background:#000"></div>
<div class="a" style="left:470px;top:569px;width:624px;height:1px;background:#000"></div>
<div class="a" style="left:470px;top:619px;width:624px;height:1px;background:#000"></div>
<div class="a" style="left:470px;top:669px;width:624px;height:1px;background:#000"></div>
<div class="a" style="left:596px;top:320px;width:1px;height:370px;background:#000"></div>
<div class="a" style="left:786px;top:320px;width:1px;height:370px;background:#000"></div>
<div class="a" style="left:900px;top:320px;width:1px;height:370px;background:#000"></div>
<div class="a lab" style="left:470px;top:337px;width:126px">建设单位</div>
<div class="a lab" style="left:787px;top:337px;width:113px">工程名称</div>
<div class="a lab" style="left:470px;top:387px;width:126px">施工单位</div>
<div class="a lab" style="left:787px;top:387px;width:113px">设计单位</div>
<div class="a lab" style="left:470px;top:437px;width:126px">图纸型号</div>
<div class="a lab" style="left:787px;top:437px;width:113px">出图日期</div>
<div class="a lab" style="left:470px;top:487px;width:126px">绿化类型</div>
<div class="a lab" style="left:787px;top:487px;width:113px">园林小品类型</div>
<div class="a lab" style="left:470px;top:537px;width:126px">绿化总面积</div>
<div class="a lab" style="left:787px;top:537px;width:113px">建筑面积</div>
<div class="a lab" style="left:470px;top:587px;width:126px">开工日期</div>
<div class="a lab" style="left:787px;top:587px;width:113px">竣工日期</div>
<div class="a lab" style="left:470px;top:637px;width:126px">山体面积</div>
<div class="a lab" style="left:787px;top:637px;width:113px">木构架类型</div>
<div class="a lab" style="left:470px;top:687px;width:126px">园路面积</div>
<div class="a lab" style="left:787px;top:687px;width:113px">园路形式</div>
<div class="a lab" style="left:901px;top:437px;width:193px">年&nbsp;&nbsp;&nbsp;&nbsp;月&nbsp;&nbsp;&nbsp;&nbsp;日</div>
<div class="a lab" style="left:597px;top:587px;width:189px">年&nbsp;&nbsp;&nbsp;&nbsp;月&nbsp;&nbsp;&nbsp;&nbsp;日</div>
<div class="a lab" style="left:901px;top:587px;width:193px">年&nbsp;&nbsp;&nbsp;&nbsp;月&nbsp;&nbsp;&nbsp;&nbsp;日</div>
<div class="a" style="left:597px;top:470px;width:190px;height:50px;border:1px solid #fff"></div>
<div class="a" style="left:598px;top:471px;width:188px;height:48px;border:1px solid #000"></div>
<svg class="a" style="left:783px;top:516px" width="7" height="7"><rect x="0" y="0" width="7" height="7" fill="#fff"/><rect x="0.5" y="0.5" width="2.5" height="2.5" fill="#000"/><rect x="4" y="0.5" width="2.5" height="2.5" fill="#000"/><rect x="0.5" y="4" width="2.5" height="2.5" fill="#000"/><rect x="4" y="4" width="2.5" height="2.5" fill="#000"/></svg>
<div class="a" style="left:799px;top:442px;width:155px;height:16px;background:#c4c4c4"></div>
<div class="a" style="left:800px;top:441px;font-weight:bold;line-height:18px;white-space:nowrap"><span style="font-size:14.5px">未经授权</span><span style="font-size:13px">[UnAuthorized]</span></div>
<div class="a" style="left:427px;top:690px;width:681px;height:12px;background:#f0f0f0;border-top:1px solid #a0a0a0"></div>
<div class="a" style="left:1096px;top:230px;width:9px;height:460px;background:#e4e4e4;border-left:2px solid #f4f4f4"></div>
<div class="a" style="left:427px;top:691px;width:16px;height:11px;background:#f0f0f0;border-left:1px solid #fff;border-right:1px solid #c0c0c0"></div>
<div class="a" style="left:443px;top:691px;width:16px;height:11px;background:#f0f0f0;border-left:1px solid #fff;border-right:1px solid #c0c0c0"></div>
<div class="a" style="left:459px;top:691px;width:17px;height:11px;background:#f0f0f0;border-left:1px solid #fff;border-right:1px solid #c0c0c0"></div>
<div class="a" style="left:476px;top:691px;width:18px;height:11px;background:#f0f0f0;border-left:1px solid #fff;border-right:1px solid #c0c0c0"></div>
<svg class="a" style="left:432px;top:696px" width="8" height="7"><rect x="0" y="0" width="1.5" height="7" fill="#000"/><path d="M7 0V7L2.5 3.5Z" fill="#000"/></svg>
<svg class="a" style="left:450px;top:696px" width="6" height="7"><path d="M5 0V7L0.5 3.5Z" fill="#000"/></svg>
<svg class="a" style="left:466px;top:696px" width="6" height="7"><path d="M0.5 0V7L5 3.5Z" fill="#000"/></svg>
<svg class="a" style="left:483px;top:696px" width="8" height="7"><path d="M0.5 0V7L5 3.5Z" fill="#000"/><rect x="5.5" y="0" width="1.5" height="7" fill="#000"/></svg>
<svg class="a" style="left:494px;top:690px" width="62" height="12"><path d="M0 0L8 12H52L60 0Z" fill="#fff"/><path d="M1.5 0.5L8 12M58.5 0.5L52 12" stroke="#000" stroke-width="1"/></svg>
<div class="a" style="left:511px;top:690px;font-size:13px;line-height:16px;white-space:nowrap">第<span style="font-family:Liberation Sans;font-size:12px">1</span>页</div>
<!-- p_rtb.html -->
<!-- grips -->
<svg class="a" style="left:430px;top:88px" width="4" height="18"><path d="M2.5 0V17H0" stroke="#a0a0a0" fill="none"/><path d="M1.5 0V16" stroke="#fff"/></svg>
<svg class="a" style="left:430px;top:112px" width="4" height="18"><path d="M2.5 0V17H0" stroke="#a0a0a0" fill="none"/><path d="M1.5 0V16" stroke="#fff"/></svg>
<svg class="a" style="left:430px;top:137px" width="4" height="19"><path d="M2.5 0V18H0" stroke="#a0a0a0" fill="none"/><path d="M1.5 0V17" stroke="#fff"/></svg>
<!-- row1 -->
<svg class="a" style="left:443px;top:90px" width="16" height="14"><path d="M0.5 0.5H6L8.5 3V9.5H0.5Z" fill="#ececec" stroke="#909090"/><path d="M2 4H6M2 6H6" stroke="#909090"/><path d="M6.5 4.5H12L15.5 8V13.5H6.5Z" fill="#ececec" stroke="#909090"/><path d="M8 8H13M8 10H13M8 12H13" stroke="#909090"/></svg>
<svg class="a" style="left:471px;top:90px" width="11" height="14"><path d="M3 0L6 8M8 0L5 8" stroke="#909090" stroke-width="1.2"/><circle cx="3" cy="11" r="2.3" fill="none" stroke="#909090" stroke-width="1.2"/><circle cx="8" cy="11" r="2.3" fill="none" stroke="#909090" stroke-width="1.2"/></svg>
<svg class="a" style="left:494px;top:90px" width="17" height="14"><rect x="0" y="1" width="12" height="12" rx="2" fill="#909090"/><rect x="3" y="0" width="6" height="2" fill="#909090"/><path d="M3 3.5H9" stroke="#fff"/><rect x="6.5" y="7.5" width="9" height="6" fill="#ececec" stroke="#909090"/><path d="M8 10H14" stroke="#909090"/></svg>
<div class="a" style="left:516px;top:88px;width:1px;height:17px;background:#a0a0a0"></div><div class="a" style="left:517px;top:88px;width:1px;height:17px;background:#fff"></div>
<svg class="a" style="left:525px;top:93px" width="13" height="8"><path d="M2 4 Q6 0 10 2 Q13 5 9 7" stroke="#909090" stroke-width="1.3" fill="none"/><path d="M0 2L0 7L5 7Z" fill="#909090"/></svg>
<svg class="a" style="left:550px;top:93px" width="13" height="8"><path d="M11 4 Q7 0 3 2 Q0 5 4 7" stroke="#909090" stroke-width="1.3" fill="none"/><path d="M13 2L13 7L8 7Z" fill="#909090"/></svg>
<div class="a" style="left:571px;top:88px;width:1px;height:17px;background:#a0a0a0"></div><div class="a" style="left:572px;top:88px;width:1px;height:17px;background:#fff"></div>
<div class="a" style="left:574px;top:87px;width:91px;height:18px;border:1px solid #a0a0a0;background:#ececec"></div>
<div class="a" style="left:578px;top:89px;font-family:'Liberation Serif',serif;font-weight:bold;font-size:13px;line-height:14px;letter-spacing:-3px">T<span style="font-size:11px;position:relative;top:2px">T</span></div>
<div class="a" style="left:593px;top:88px;font-size:13px;line-height:16px;color:#909090">宋体</div>
<svg class="a" style="left:652px;top:94px" width="8" height="4"><path d="M0 0H8L4 4Z" fill="#909090"/></svg>
<div class="a" style="left:667px;top:88px;width:1px;height:17px;background:#a0a0a0"></div><div class="a" style="left:668px;top:88px;width:1px;height:17px;background:#fff"></div>
<div class="a" style="left:670px;top:87px;width:59px;height:18px;border:1px solid #a0a0a0;background:#ececec"></div>
<div class="a" style="left:672px;top:90px;font-family:'Liberation Sans',sans-serif;font-size:12px;line-height:15px;color:#707070">10</div>
<svg class="a" style="left:716px;top:94px" width="8" height="4"><path d="M0 0H8L4 4Z" fill="#909090"/></svg>
<svg class="a" style="left:735px;top:89px" width="17" height="16"><path d="M6 0H13L14 4Q17 6 16 10L14 14Q11 16 7 15L2 12L0 10L4 7Z" fill="#a0a0a0"/><path d="M8 11L12 7" stroke="#fff" stroke-width="1"/></svg>
<div class="a" style="left:764px;top:89px;font-family:'Liberation Serif',serif;font-weight:bold;font-size:14.5px;line-height:14px;color:#a0a0a0">B</div>
<svg class="a" style="left:788px;top:92px" width="13" height="10"><path d="M1 9.5L12 0.5" stroke="#a0a0a0" stroke-width="2"/><path d="M8 0.5H12M1 9.5H5" stroke="#a0a0a0"/></svg>
<div class="a" style="left:815px;top:89px;font-family:'Liberation Serif',serif;font-weight:bold;font-size:12px;line-height:13px;color:#a0a0a0;text-decoration:underline">U</div>
<svg class="a" style="left:841px;top:90px" width="14" height="14"><path d="M2 6L7 1L12 6L7 11Z" fill="#ececec" stroke="#a0a0a0" stroke-width="1.5"/><path d="M12 6Q14 9 13 10" stroke="#a0a0a0" stroke-width="1.5" fill="none"/><rect x="0" y="12" width="14" height="2" fill="#a0a0a0"/></svg>
<div class="a" style="left:867px;top:89px;font-family:'Liberation Serif',serif;font-size:12px;line-height:12px;color:#a0a0a0">A</div>
<div class="a" style="left:866px;top:102px;width:12px;height:2px;background:#a0a0a0"></div>
<div class="a" style="left:887px;top:88px;width:1px;height:17px;background:#a0a0a0"></div><div class="a" style="left:888px;top:88px;width:1px;height:17px;background:#fff"></div>
<svg class="a" style="left:897px;top:93px" width="10" height="9"><path d="M0 4.5H10M5 0V9" stroke="#a0a0a0" stroke-width="2"/></svg>
<div class="a" style="left:923px;top:96px;width:10px;height:2px;background:#a0a0a0"></div>
<div class="a" style="left:944px;top:88px;width:1px;height:17px;background:#a0a0a0"></div><div class="a" style="left:945px;top:88px;width:1px;height:17px;background:#fff"></div>
<div class="a" style="left:955px;top:89px;font-family:'Liberation Serif',serif;font-style:italic;font-weight:bold;font-size:14px;line-height:14px;color:#a0a0a0">b<span style="font-size:9px;vertical-align:5px">2</span></div>
<div class="a" style="left:978px;top:88px;width:1px;height:17px;background:#a0a0a0"></div><div class="a" style="left:979px;top:88px;width:1px;height:17px;background:#fff"></div>
<svg class="a" style="left:987px;top:89px" width="18" height="17"><circle cx="8.5" cy="8.5" r="7.5" fill="none" stroke="#a0a0a0" stroke-width="1.3"/><text x="3" y="12" font-size="9" font-family="Liberation Sans" fill="#a0a0a0">1/a</text></svg>
<div class="a" style="left:1012px;top:88px;width:1px;height:17px;background:#a0a0a0"></div><div class="a" style="left:1013px;top:88px;width:1px;height:17px;background:#fff"></div>
<div class="a" style="left:1018px;top:88px;width:22px;height:18px;background:repeating-conic-gradient(#f8f8f8 0 25%,#e4e4e4 0 50%) 0 0/2px 2px"></div>
<svg class="a" style="left:1023px;top:92px" width="14" height="13"><rect x="0.5" y="0.5" width="13" height="8" fill="none" stroke="#a0a0a0"/><path d="M2 3H11M2 5.5H11" stroke="#a0a0a0"/><path d="M7 9V12.5H13" stroke="#a0a0a0" fill="none"/></svg>
<svg class="a" style="left:1048px;top:92px" width="13" height="11"><path d="M0 0.5H13M0 3.5H10M0 6.5H13M0 9.5H10" stroke="#a0a0a0"/></svg>
<div class="a" style="left:1069px;top:88px;width:23px;height:18px;background:repeating-conic-gradient(#f8f8f8 0 25%,#e4e4e4 0 50%) 0 0/2px 2px"></div>
<svg class="a" style="left:1075px;top:92px" width="13" height="11"><path d="M0 0.5H13M2 3.5H11M0 6.5H13M2 9.5H11" stroke="#a0a0a0"/></svg>
<!-- row2 -->
<svg class="a" style="left:441px;top:113px" width="17" height="16"><rect x="0" y="0" width="6" height="4" fill="#909090"/><rect x="0" y="10" width="6" height="4" fill="#909090"/><path d="M1 2H5" stroke="#fff"/><path d="M16 5H11V10H16M11 7.5H6" stroke="#909090" stroke-width="1.3" fill="none"/><path d="M6 7.5L9 5V10Z" fill="#909090"/><rect x="14" y="14" width="1" height="1" fill="#606060"/></svg>
<svg class="a" style="left:466px;top:113px" width="17" height="16"><path d="M0.5 0.5H13.5V7.5H0.5ZM4.5 0.5V15M9.5 0.5V15M0.5 4H13.5" stroke="#909090" fill="none"/><path d="M6 1L12 6" stroke="#909090"/><rect x="15" y="14" width="1" height="1" fill="#606060"/></svg>
<svg class="a" style="left:491px;top:113px" width="17" height="16"><rect x="0" y="0" width="16" height="15" rx="1" fill="#909090"/><path d="M3 3H8M3 7H13M3 11H7" stroke="#d8d8d8" stroke-width="1"/></svg>
<svg class="a" style="left:517px;top:113px" width="16" height="16"><rect x="0.5" y="0.5" width="4" height="5" fill="none" stroke="#909090"/><rect x="9.5" y="0.5" width="4" height="5" fill="none" stroke="#909090"/><path d="M7 5V15M4 11V15M4 11H10V15M7 5L5 7M7 5L9 7" stroke="#909090" fill="none"/><rect x="15" y="14" width="1" height="1" fill="#606060"/></svg>
<svg class="a" style="left:541px;top:113px" width="16" height="16"><path d="M0.5 0.5H8.5V14.5H0.5ZM0.5 5H8.5M0.5 10H8.5M4.5 0.5V14.5" stroke="#909090" fill="none"/><path d="M8 7H15M8 10H15" stroke="#909090"/><rect x="15" y="14" width="1" height="1" fill="#606060"/></svg>
<svg class="a" style="left:567px;top:113px" width="14" height="15"><rect x="0.5" y="0.5" width="4" height="4" fill="none" stroke="#909090"/><rect x="8.5" y="0.5" width="4" height="4" fill="none" stroke="#909090"/><path d="M2.5 4.5V7H10.5V4.5M6.5 7V14M4 11L6.5 14L9 11" stroke="#909090" fill="none"/></svg>
<svg class="a" style="left:592px;top:113px" width="16" height="16"><rect x="0" y="0" width="12" height="6" fill="#a8a8a8"/><rect x="0" y="8" width="12" height="6" fill="#a8a8a8"/><path d="M1 2H11M1 4H11M1 10H11M1 12H11" stroke="#d8d8d8" stroke-dasharray="1 1"/><path d="M13 4V13H10" stroke="#909090" fill="none"/><rect x="15" y="14" width="1" height="1" fill="#606060"/></svg>
<svg class="a" style="left:618px;top:113px" width="16" height="16"><rect x="0" y="0" width="12" height="6" fill="#a8a8a8"/><rect x="0" y="8" width="12" height="6" fill="#a8a8a8"/><path d="M1 2H11M1 4H11M1 10H11M1 12H11" stroke="#d8d8d8" stroke-dasharray="1 1"/><path d="M13 4V13H10" stroke="#909090" fill="none"/><rect x="15" y="14" width="1" height="1" fill="#606060"/></svg>
<svg class="a" style="left:643px;top:114px" width="11" height="14"><path d="M2.5 6V3.5Q5.5 0 8.5 3.5V6" stroke="#a0a0a0" stroke-width="1.4" fill="none"/><rect x="0" y="6" width="11" height="8" fill="#a8a8a8"/><path d="M1 8H10M1 10H10M1 12H10" stroke="#d8d8d8" stroke-dasharray="1 1"/></svg>
<div class="a" style="left:663px;top:112px;width:1px;height:17px;background:#a0a0a0"></div><div class="a" style="left:664px;top:112px;width:1px;height:17px;background:#fff"></div>
<svg class="a" style="left:671px;top:114px" width="15" height="14"><path d="M3 0V14M0 3L3 0L6 3M0 11L3 14L6 11" stroke="#909090" fill="none"/><path d="M8 2H15M8 5H15M8 8H15M8 11H15" stroke="#909090"/></svg>
<svg class="a" style="left:696px;top:114px" width="15" height="14"><path d="M3 0V5M0 2L3 5L6 2M3 9V14M0 12L3 9L6 12" stroke="#909090" fill="none"/><path d="M8 2H15M8 5H15M8 8H15M8 11H15" stroke="#909090"/></svg>
<svg class="a" style="left:722px;top:113px" width="14" height="16"><path d="M1 3L4 0L13 11L10 14Z" fill="#ececec" stroke="#909090"/><text x="7" y="15" font-size="6" font-family="Liberation Sans" fill="#909090">c</text></svg>
<div class="a" style="left:742px;top:112px;width:1px;height:17px;background:#a0a0a0"></div><div class="a" style="left:743px;top:112px;width:1px;height:17px;background:#fff"></div>
<svg class="a" style="left:748px;top:113px" width="17" height="16"><path d="M0 0L4 3L0 6Z" fill="#909090"/><rect x="4" y="3" width="12" height="12" fill="#a8a8a8"/><path d="M4 15L16 3" stroke="#fff" stroke-width="1.5"/><path d="M5 5H15M5 8H15M5 11H15" stroke="#c8c8c8" stroke-dasharray="1 1"/></svg>
<svg class="a" style="left:773px;top:118px" width="10" height="5"><path d="M0 0H10L5 5Z" fill="#a0a0a0"/></svg>
<div class="a" style="left:787px;top:112px;width:1px;height:17px;background:#a0a0a0"></div><div class="a" style="left:788px;top:112px;width:1px;height:17px;background:#fff"></div>
<svg class="a" style="left:793px;top:114px" width="17" height="15"><path d="M6.5 3.5H15.5V14.5H6.5Z" fill="#ececec" stroke="#909090"/><path d="M9 7H14M9 10H14M9 13H14" stroke="#909090"/><path d="M0 8L5 2L7 4L2 10Z" fill="#a0a0a0"/><path d="M1 12L5 8" stroke="#909090" stroke-width="1.3"/></svg>
<div class="a" style="left:820px;top:113px;font-family:'Liberation Serif',serif;font-weight:bold;font-size:17px;line-height:17px">&Sigma;</div>
<svg class="a" style="left:842px;top:118px" width="11" height="6"><path d="M0 0H11L5.5 6Z" fill="#000"/></svg>
<div class="a" style="left:857px;top:112px;width:1px;height:17px;background:#a0a0a0"></div><div class="a" style="left:858px;top:112px;width:1px;height:17px;background:#fff"></div>
<div class="a" style="left:860px;top:111px;width:67px;height:19px;border:1px solid #a0a0a0;background:#fff"></div>
<div class="a" style="left:862px;top:113px;font-size:12px;line-height:15px;letter-spacing:-0.5px">100%</div>
<div class="a" style="left:910px;top:112px;width:15px;height:16px;background:#ececec"></div>
<svg class="a" style="left:913px;top:118px" width="9" height="5"><path d="M0 0H9L4.5 5Z" fill="#000"/></svg>
<div class="a" style="left:929px;top:112px;width:1px;height:17px;background:#a0a0a0"></div><div class="a" style="left:930px;top:112px;width:1px;height:17px;background:#fff"></div>
<div class="a" style="left:932px;top:111px;width:80px;height:18px;border:1px solid #a0a0a0;background:#ececec"></div>
<div class="a" style="left:938px;top:119px;width:53px;height:1px;background:#909090"></div>
<svg class="a" style="left:999px;top:118px" width="8" height="4"><path d="M0 0H8L4 4Z" fill="#a0a0a0"/></svg>
<svg class="a" style="left:1018px;top:114px" width="15" height="14"><rect x="1" y="1" width="13" height="12" fill="#fff" stroke="#a0a0a0" stroke-width="2"/><path d="M4 4L11 10" stroke="#a0a0a0" stroke-width="1.5" stroke-dasharray="1.5 1"/></svg>
<svg class="a" style="left:1042px;top:118px" width="10" height="5"><path d="M0 0H10L5 5Z" fill="#a0a0a0"/></svg>
<svg class="a" style="left:1060px;top:114px" width="15" height="14"><rect x="1" y="1" width="13" height="12" fill="#fff" stroke="#a0a0a0" stroke-width="2"/><path d="M4 4L11 10" stroke="#a0a0a0" stroke-width="1.5" stroke-dasharray="1.5 1"/></svg>
<svg class="a" style="left:1084px;top:118px" width="10" height="5"><path d="M0 0H10L5 5Z" fill="#a0a0a0"/></svg>
<!-- row3 -->
<div class="a" style="left:443px;top:139px;font-family:'Liberation Sans',sans-serif;font-size:9px;line-height:9px;color:#909090;white-space:nowrap">1<span style="position:relative;top:3px">2</span><span style="position:relative;top:5px">3</span></div>
<div class="a" style="left:459px;top:139px;font-size:12px;line-height:16px;color:#909090;white-space:nowrap">随机数</div>
<svg class="a" style="left:520px;top:140px" width="11" height="13"><path d="M5.5 0V13M3 13H8" stroke="#909090" stroke-width="1.3"/><path d="M1 6.5Q1 4 5.5 4Q10 4 10 6.5Q10 9 5.5 9Q1 9 1 6.5Z" fill="none" stroke="#909090" stroke-width="1.3"/></svg>
<div class="a" style="left:534px;top:139px;font-size:12px;line-height:16px;color:#909090;white-space:nowrap">特殊符号</div>
<div class="a" style="left:593px;top:136px;font-family:'Liberation Serif',serif;font-size:20px;line-height:20px;transform:scaleX(0.52);transform-origin:0 0;white-space:nowrap;letter-spacing:-1px">NO</div>
<div class="a" style="left:609px;top:139px;font-size:12px;line-height:16px;white-space:nowrap">重新编号</div>
<svg class="a" style="left:668px;top:140px" width="14" height="12"><path d="M3.5 1H7Q12 1 12 6Q12 11 7 11H3.5ZM3.5 1V11" stroke="#909090" stroke-width="1.6" fill="none"/><path d="M0 6H14" stroke="#909090" stroke-width="1.2"/></svg>
<div class="a" style="left:684px;top:139px;font-size:12px;line-height:16px;color:#909090;white-space:nowrap">画删除线</div>
<svg class="a" style="left:741px;top:144px" width="9" height="5"><path d="M0 0H9L4.5 5Z" fill="#a0a0a0"/></svg>
<!-- floating window -->
<div class="a" style="left:1096px;top:83px;width:14px;height:69px;border-radius:5px 0 0 0;background:linear-gradient(#9a9028,#7a7018 35%,#5c5620 40%,#4c4830);border:1px solid #2c2a18;border-right:none"></div>
<svg class="a" style="left:1101px;top:90px" width="7" height="15"><path d="M1 4L5 2L7 3V10L3 11Z" fill="#3080e0"/><path d="M3 0L4 5" stroke="#fff" stroke-width="1"/><path d="M2 10L4 12L7 11V9Z" fill="#909090"/><path d="M0 13L7 10V14L2 15Z" fill="#30b030"/></svg>
<div class="a" style="left:1099px;top:110px;width:9px;height:37px;background:#8c8c8c;border:1px solid #403c28;border-right:none"></div>
<div class="a" style="left:1101px;top:112px;width:7px;height:33px;background:#fff"></div>
<div class="a" style="left:1102px;top:113px;width:6px;height:31px;background:linear-gradient(90deg,#2890c0,#58c0e8)"></div>
<div class="a" style="left:1106px;top:123px;width:2px;height:12px;background:#909090"></div>

</body></html>
